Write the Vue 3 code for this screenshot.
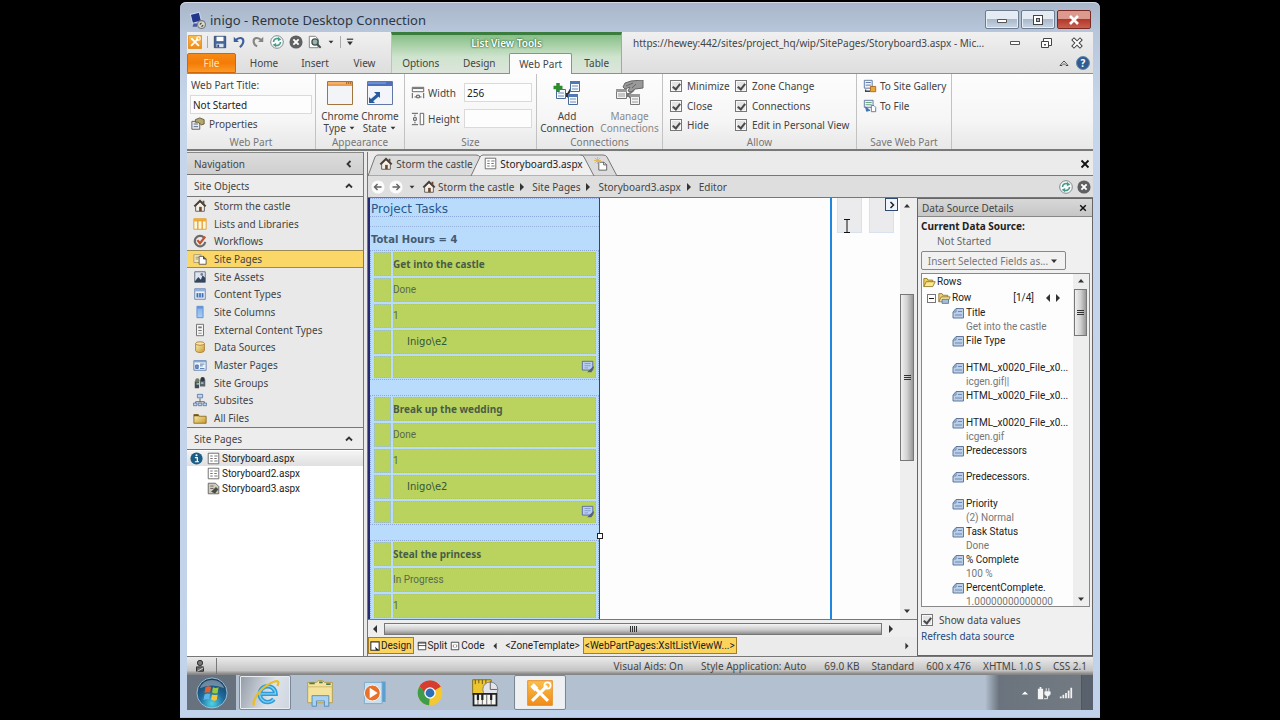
<script setup>
import { ref } from 'vue'

const title = ref('Not Started')
const partWidth = ref('256')
const partHeight = ref('')
const showValues = ref(true)

const allow = [
  ['Minimize', 'Close', 'Hide'],
  ['Zone Change', 'Connections', 'Edit in Personal View'],
]

const siteObjects = [
  { icon: 'home', label: 'Storm the castle' },
  { icon: 'lists', label: 'Lists and Libraries' },
  { icon: 'workflow', label: 'Workflows' },
  { icon: 'pages', label: 'Site Pages', active: true },
  { icon: 'assets', label: 'Site Assets' },
  { icon: 'ctype', label: 'Content Types' },
  { icon: 'column', label: 'Site Columns' },
  { icon: 'external', label: 'External Content Types' },
  { icon: 'data', label: 'Data Sources' },
  { icon: 'master', label: 'Master Pages' },
  { icon: 'groups', label: 'Site Groups' },
  { icon: 'subsites', label: 'Subsites' },
  { icon: 'folder', label: 'All Files' },
]

const pages = [
  { name: 'Storyboard.aspx', icon: 'page', info: true },
  { name: 'Storyboard2.aspx', icon: 'page' },
  { name: 'Storyboard3.aspx', icon: 'pageedit' },
]

const crumbs = ['Storm the castle', 'Site Pages', 'Storyboard3.aspx', 'Editor']

const tasks = [
  { title: 'Get into the castle', rows: 5, status: 'Done', hours: 1, owner: 'Inigo\\e2' },
  { title: 'Break up the wedding', rows: 5, status: 'Done', hours: 1, owner: 'Inigo\\e2' },
  { title: 'Steal the princess', rows: 3, status: 'In Progress', hours: 1, owner: 'Inigo\\e2' },
]

const fields = [
  { name: 'Title', value: 'Get into the castle' },
  { name: 'File Type', value: '' },
  { name: 'HTML_x0020_File_x0...', value: 'icgen.gif||' },
  { name: 'HTML_x0020_File_x0...', value: '' },
  { name: 'HTML_x0020_File_x0...', value: 'icgen.gif' },
  { name: 'Predecessors', value: '' },
  { name: 'Predecessors.', value: '' },
  { name: 'Priority', value: '(2) Normal' },
  { name: 'Task Status', value: 'Done' },
  { name: '% Complete', value: '100 %' },
  { name: 'PercentComplete.', value: '1.00000000000000' },
]

const status = ['Visual Aids: On', 'Style Application: Auto', '69.0 KB', 'Standard', '600 x 476', 'XHTML 1.0 S', 'CSS 2.1']
const taskbar = ['ie', 'explorer', 'media', 'chrome', 'movie', 'designer']
</script>

<template>
  <div class="screen">
    <svg class="defs" aria-hidden="true">
      <defs>
        <linearGradient id="gFolder" x1="0" y1="0" x2="1" y2="1"><stop offset="0" stop-color="#fff0b0" /><stop offset="1" stop-color="#c89a30" /></linearGradient>
        <linearGradient id="gOrange" x1="0" y1="0" x2="0" y2="1"><stop offset="0" stop-color="#fbc04a" /><stop offset="1" stop-color="#f08a18" /></linearGradient>
        <linearGradient id="gBlue" x1="0" y1="0" x2="0" y2="1"><stop offset="0" stop-color="#7fb0ea" /><stop offset="1" stop-color="#a9cdf6" /></linearGradient>
        <radialGradient id="gOrb" cx=".5" cy=".85" r=".9"><stop offset="0" stop-color="#4fd3e6" /><stop offset=".45" stop-color="#1f6a9c" /><stop offset="1" stop-color="#1b3350" /></radialGradient>
        <symbol id="home" viewBox="0 0 16 16"><path d="M3 8v6h10V8L8 3z" fill="#f4f0e8" stroke="#555" /><path d="M1.500 8.500 8 2l6.500 6.500" fill="none" stroke="#4a3d35" stroke-width="2.200" /><path d="M11 2h2v4h-2z" fill="#6a4a3a" /><path d="M7 9h3v5H7z" fill="#6b4a30" /></symbol>
        <symbol id="lists" viewBox="0 0 16 16"><path d="M1 2h14v12H1z" fill="#fff8dc" stroke="#d99a2b" /><path d="M1 2h14v3H1z" fill="#f2a930" /><path d="M5.500 4v10M10.500 4v10" stroke="#dca03a" stroke-width="1.500" /></symbol>
        <symbol id="workflow" viewBox="0 0 16 16"><path d="M12.500 4A6 6 0 1 0 14 9" fill="none" stroke="#6b6b6b" stroke-width="2.500" /><path d="m5 7 3 3.500L14 3" fill="none" stroke="#c0522f" stroke-width="2.500" /></symbol>
        <symbol id="pages" viewBox="0 0 16 16"><path d="M1 3h8v9H1z" fill="#f5e6b8" stroke="#a99a70" /><path d="M3 6h4M3 8h3" stroke="#9a8a60" /><path d="M7 5h5l3 3v6H7z" fill="#fff" stroke="#555" /><path d="M12 5v3h3" fill="#667" stroke="#444" /></symbol>
        <symbol id="assets" viewBox="0 0 16 16"><path d="M2 2h12v12H2z" fill="#dfe5ee" stroke="#5b6678" /><path d="m2 13 4-5 3 3 2-5 3 3v5H2z" fill="#33445e" /><circle cx="10" cy="5" r="1.500" fill="#6a7d9a" /></symbol>
        <symbol id="ctype" viewBox="0 0 16 16"><path d="M2 2h12v12H2z" fill="#eef3fa" stroke="#5b7aa8" /><path d="M2 2h12v3H2z" fill="#8fb0dc" /><path d="M4 7h8v5H4z" fill="#3f6fae" /><path d="M6.500 7v5M9.500 7v5" stroke="#d8e6f8" /></symbol>
        <symbol id="column" viewBox="0 0 16 16"><path d="M4.500 1.500h7v13h-7z" fill="url(#gBlue)" stroke="#5b8acb" /><path d="M5 2h6v2H5z" fill="#5f93d8" /></symbol>
        <symbol id="external" viewBox="0 0 16 16"><path d="M4 1.500h8v13H4z" fill="#f5f5f5" stroke="#666" /><path d="M6 4h4v2H6zM6 8h4v1H6zM6 11h4v1H6z" fill="#777" /></symbol>
        <symbol id="data" viewBox="0 0 16 16"><path d="M3 4v8c0 3 10 3 10 0V4" fill="url(#gFolder)" stroke="#a87d30" /><ellipse cx="8" cy="4" rx="5" ry="2" fill="#fbe7ad" stroke="#a87d30" /></symbol>
        <symbol id="master" viewBox="0 0 16 16"><path d="M1 3h14v11H1z" fill="#edf3fb" stroke="#5b7aa8" /><path d="M1 3h14v2H1z" fill="#87a8d2" /><path d="M3 8h3v4H3zM8 7h5M8 9h3M8 12h5" fill="#6d93c6" stroke="#4d74ac" /></symbol>
        <symbol id="groups" viewBox="0 0 16 16"><path d="M2 6h5v8H2z" fill="#444b50" /><path d="M8 4h6v8H8z" fill="#58646c" /><circle cx="5" cy="5" r="2.500" fill="#6e7c5e" /><circle cx="11" cy="3.500" r="2.500" fill="#30373c" /><path d="M4 8h3v2H4zM9 7h3v2H9z" fill="#9cb2c2" /></symbol>
        <symbol id="subsites" viewBox="0 0 16 16"><path d="M8 6v4M3 12v-2h10v2" fill="none" stroke="#555" /><path d="M5 1.500h6v4H5zM.500 11.500h4v3h-4zM6 11.500h4v3H6zM11.500 11.500h4v3h-4z" fill="#bcd2ee" stroke="#5d7ca8" /></symbol>
        <symbol id="folder" viewBox="0 0 16 16"><path d="M1 4h5l1 2h8v8H1z" fill="url(#gFolder)" stroke="#8a6a20" /><path d="M1 4h5l1 2H1z" fill="#6d5520" /></symbol>
        <symbol id="folderopen" viewBox="0 0 16 16"><path d="M1 13V3h4l1 2h6v3" fill="#f0cf60" stroke="#8a7020" /><path d="M1 13 4 7h11l-3 6z" fill="#fbe88a" stroke="#8a7020" /></symbol>
        <symbol id="rowfolder" viewBox="0 0 16 16"><path d="M1 12V2h4l1 2h6v3" fill="#f0cf80" stroke="#8a7020" /><path d="M1 12 4 6h11l-3 6z" fill="#fbe8a0" stroke="#8a7020" /><path d="M5 9h8v5H5z" fill="#a9bdd4" stroke="#56708c" /></symbol>
        <symbol id="page" viewBox="0 0 16 16"><path d="M1.500 1.500h13v13h-13z" fill="#fff" stroke="#555" /><path d="M4 5h3M4 8h3M4 11h3M9 5h4M9 8h3M9 11h4" stroke="#777" stroke-width="1.300" /></symbol>
        <symbol id="pageedit" viewBox="0 0 16 16"><path d="M1.500 1.500h9l4 4v9h-13z" fill="#cfcbbd" stroke="#555" /><path d="M4 5h4M4 8h4" stroke="#555" /><path d="m5 12 6-6 3 3-4 5z" fill="#4b4b45" /></symbol>
        <symbol id="info" viewBox="0 0 16 16"><circle cx="8" cy="8" r="7.500" fill="#1c5d85" /><circle cx="8" cy="4" r="1.300" fill="#fff" /><path d="M6 7h3v5M6 12h5" stroke="#fff" stroke-width="1.500" fill="none" /></symbol>
        <symbol id="newtab" viewBox="0 0 16 16"><path d="M5.500 6h6l3 3v6h-9z" fill="#fff" stroke="#555" /><path d="M11 6v3h3.500" fill="none" stroke="#555" /><path d="M4 0v8M0 4h8M1 1l6 6M7 1 1 7" stroke="#e2b545" stroke-width="1" /></symbol>
        <symbol id="field" viewBox="0 0 12 12"><path d="M1 5 4 1.500h7.500V11H1z" fill="#bccfe8" stroke="#5f789c" /><path d="M1 5h3V2M6 4.500h4M3 8h7" fill="none" stroke="#6e8ab2" /></symbol>
        <symbol id="sd" viewBox="0 0 16 16"><path d="M.500.500h15v15H.500z" fill="url(#gOrange)" stroke="#e58b20" /><path d="m3.500 12.500 8-8M4.500 4.500l8 8" stroke="#fff" stroke-width="2" /><circle cx="12" cy="4" r="2" fill="none" stroke="#fff" stroke-width="1.300" /><path d="m3 3 3 1-2 2z" fill="#fff" /></symbol>
        <symbol id="save" viewBox="0 0 16 16"><path d="M1.500 1.500h13v13h-13z" fill="#46669c" stroke="#2b4474" /><path d="M4 2h8v5H4z" fill="#fff" /><path d="M4 10h8v4H4z" fill="#dbe4f2" /><path d="M5 11h2v3H5z" fill="#2b4474" /></symbol>
        <symbol id="undo" viewBox="0 0 16 16"><path d="M2 2v6h6z" fill="#3f5f9e" /><path d="M4 6c4-4 9-3 9 1 0 3-2 5-4 7" fill="none" stroke="#3f5f9e" stroke-width="2.400" /></symbol>
        <symbol id="redo" viewBox="0 0 16 16"><path d="M14 2v6H8z" fill="#858585" /><path d="M12 6C8 2 3 3 3 7c0 3 2 5 4 6" fill="none" stroke="#858585" stroke-width="2.400" /></symbol>
        <symbol id="refresh" viewBox="0 0 16 16"><circle cx="8" cy="8" r="7.200" fill="#f8fbfa" stroke="#6d7d86" /><path d="M4 8a4 4 0 0 1 6-3.500M12 8a4 4 0 0 1-6 3.500" fill="none" stroke="#4a9a8a" stroke-width="1.800" /><path d="m9 2 4 3-4 2zM7 14l-4-3 4-2z" fill="#4a9a8a" /></symbol>
        <symbol id="stop" viewBox="0 0 16 16"><circle cx="8" cy="8" r="7.500" fill="#5f6062" /><path d="m5 5 6 6M11 5l-6 6" stroke="#fff" stroke-width="2.200" /></symbol>
        <symbol id="preview" viewBox="0 0 16 16"><path d="M1.500 1.500h7l3 3v10h-10z" fill="#fff" stroke="#777" /><circle cx="8" cy="8" r="3.500" fill="#9fb3ad" stroke="#3f5450" stroke-width="1.500" /><path d="m10.500 10.500 4 4" stroke="#3f5450" stroke-width="2.300" /></symbol>
        <symbol id="rdp" viewBox="0 0 16 16"><path d="m2 3 8-2 2 8-8 2z" fill="#24358c" stroke="#c9d3ee" /><path d="m5 11 3 0 0 3-4 0z" fill="#48589c" /><circle cx="12" cy="12" r="3.500" fill="#d8d8ca" stroke="#777" /><path d="m10.500 12 1.500-1.500M12 14l1.500-1.500" stroke="#444" /></symbol>
        <symbol id="props" viewBox="0 0 16 16"><path d="M1 5h9v9H1z" fill="#e9edf2" stroke="#555" /><path d="M3 8h5M3 11h5" stroke="#4a5b7a" /><path d="m5 3 5-2 5 2v5l-3 1-4-3H5z" fill="#b3a76c" stroke="#5d552e" /></symbol>
        <symbol id="ctypebig" viewBox="0 0 26 24"><path d="M.500.500h25v23H.500z" fill="#f3f4f7" stroke="#a27440" /><path d="M1 1h24v4H1z" fill="#eb9c4c" /><path d="M1 2h18" stroke="#f7c48c" /><path d="M19 2h5" stroke="#7a3d10" stroke-dasharray="1 1" /></symbol>
        <symbol id="cstatebig" viewBox="0 0 26 24"><path d="M.500.500h25v23H.500z" fill="#f3f5fa" stroke="#6278a4" /><path d="M1 1h24v4H1z" fill="#4c6fc0" /><path d="M1 2h18" stroke="#8fa9e0" /><path d="m4 20 7-6" stroke="#275d9e" stroke-width="3" /><path d="M7 11h6v6zM2 16v6h6z" fill="#275d9e" /></symbol>
        <symbol id="wicon" viewBox="0 0 16 16"><path d="M1.500 1.500h13v5h-13z" fill="#fff" stroke="#555" /><path d="M2 2h12v1.500H2z" fill="#777" /><path d="M1.500 8v6M14.500 8v6M4 12.500h2M10 12.500h2" stroke="#444" /><path d="M6.500 10.500h3v3h-3z" fill="none" stroke="#444" /></symbol>
        <symbol id="hicon" viewBox="0 0 16 16"><path d="M10.500 1.500h4v13h-4z" fill="#fff" stroke="#555" /><path d="M1 1.500h7M1 14.500h7M4.500 3v2M4.500 11v2" stroke="#444" /><path d="M3 6.500h3v3H3z" fill="none" stroke="#444" /></symbol>
        <symbol id="connect" viewBox="0 0 28 26"><path d="M12 14h3l4-7M12 16h3l2 5" fill="none" stroke="#333" stroke-width="2" /><path d="M17.500 1.500h9v10h-9zM3.500 9.500h9v9h-9zM15.500 14.500h9v10h-9z" fill="#f6f9fd" stroke="#4a6a98" /><path d="M17 1h10v3H17zM15 14h10v3H15z" fill="#4e78b4" /><path d="M19 6h6M19 9h6M5 13h6M5 16h6M17 19h6M17 22h6" stroke="#6d8cb8" /><path d="M5 3v9M.500 7.500h9" stroke="#2e8b2e" stroke-width="3.500" /></symbol>
        <symbol id="manage" viewBox="0 0 28 26"><path d="M10 14h3l5-4M10 16h3l3 4" fill="none" stroke="#777" stroke-width="2" /><path d="M.500 9.500h10v9H.500zM14.500 14.500h9v10h-9z" fill="#f3f3f3" stroke="#777" /><path d="M0 9h11v3H0zM14 14h10v3H14z" fill="#999" /><path d="M2 14h7M2 16h7M16 19h6M16 22h6" stroke="#999" /><path d="m9 3 6-2 12-1v8l-8 1-4 3-3-1 2-4-5 2-2-2z" fill="#999" stroke="#666" /><path d="m10 6 7-3M16 8l4-4" stroke="#666" /></symbol>
        <symbol id="gallery" viewBox="0 0 16 16"><path d="M1.500 1.500h9v9h-9z" fill="#eef3fb" stroke="#536f9c" /><path d="M3 4h6M3 7h6" stroke="#536f9c" /><path d="M3 12v2h5" fill="none" stroke="#444" stroke-width="1.500" /><path d="M8.500 8.500h6v6h-6z" fill="#eda63c" stroke="#a3661b" /></symbol>
        <symbol id="tofile" viewBox="0 0 16 16"><path d="M1.500 1.500h10v8h-10z" fill="#eef3fb" stroke="#536f9c" /><path d="M3 4h7M3 6.500h7" stroke="#5f9c70" /><path d="m3 9 5 4-4 1z" fill="#3f6fb4" stroke="#3f6fb4" /><path d="M9.500 7.500h3l2 2v5h-5z" fill="#fff" stroke="#536f9c" /></symbol>
        <symbol id="formedit" viewBox="0 0 16 16"><path d="M1.500 1.500h12v10h-12z" fill="#b9cef2" stroke="#50679c" /><path d="M4 4h7M4 6.500h7M4 9h4" stroke="#7e98cc" /><path d="M7 14h5l3-6-1-1-5 5z" fill="#56607a" /></symbol>
        <symbol id="design" viewBox="0 0 12 12"><path d="M1 1h10v10H1z" fill="#fff" stroke="#333" stroke-width="1.300" /><path d="m6 7 5 4H7z" fill="#222" /></symbol>
        <symbol id="split" viewBox="0 0 12 12"><path d="M1.500 1.500h9v9h-9z" fill="#fff" stroke="#333" /><path d="M1 5.500h10M1 2.500h10" stroke="#333" /></symbol>
        <symbol id="code" viewBox="0 0 12 12"><path d="M1.500 1.500h9v9h-9z" fill="#fff" stroke="#333" /><path d="M5 4 3.500 6 5 8M7 4l1.500 2L7 8" fill="none" stroke="#666" /></symbol>
        <symbol id="user" viewBox="0 0 16 16"><circle cx="8" cy="4.500" r="3" fill="#777" stroke="#222" /><path d="M4 9h8v5H4z" fill="#6c6c6c" stroke="#222" /><path d="m5 14 7-4" stroke="#ddd" /></symbol>
        <symbol id="start" viewBox="0 0 34 34"><circle cx="17" cy="17" r="16" fill="url(#gOrb)" stroke="#9cc3d8" /><path d="M10 11q3-2 6-.500l-1 6q-3-1-6 .500z" fill="#e3602c" /><path d="M18 11q3 1.500 6 0l-1 6q-3 1.500-6-.500z" fill="#97c93d" /><path d="M9 18.500q3-1.500 6-.500l-1 6q-3-1-6 .500z" fill="#5cb4e8" /><path d="M17 18.500q3 1.500 6 0l-1 6q-3 1.500-6-.500z" fill="#fbc431" /><path d="M4 12a14 14 0 0 1 26 0q-13-6-26 0z" fill="#fff" opacity=".35" /></symbol>
        <symbol id="ie" viewBox="0 0 34 34"><path d="M27 24a9 9 0 1 1 2-6H12" fill="none" stroke="#2f9bd8" stroke-width="5" /><path d="M27 24a9 9 0 1 1 2-6H12" fill="none" stroke="#7fd0f2" stroke-width="1.500" /><path d="M5 31C1 27 12 9 28 4c6-2 4 3 3 5" fill="none" stroke="#e9bd2b" stroke-width="2.600" /></symbol>
        <symbol id="explorer" viewBox="0 0 34 34"><path d="M3 5h10l2-2h5l2 2h9v23H3z" fill="#f3e39c" stroke="#b59a48" /><path d="M3 10h28" stroke="#cdb768" /><path d="M5 6h6M16 5h4M24 7h5" stroke="#4d7a50" stroke-width="2" /><path d="M8 32V20h19v12h-5v-6h-9v6z" fill="#a9d2f0" stroke="#5389b8" /></symbol>
        <symbol id="media" viewBox="0 0 34 34"><path d="M24 4h5v23h-5z" fill="#5aa0d0" /><path d="M5 5h20v24H5z" fill="#c9e0f0" stroke="#77a8cc" /><circle cx="14" cy="17" r="9" fill="#e8722a" stroke="#fff" /><path d="M11 11v12l9-6z" fill="#fff" /></symbol>
        <symbol id="chrome" viewBox="0 0 34 34"><circle cx="17" cy="17" r="14" fill="#f3c831" /><path d="M17 17 4.900 10a14 14 0 0 1 24.200 0z" fill="#d63c2f" /><path d="M17 17 4.900 10A14 14 0 0 0 16 31z" fill="#3f9c4b" /><path d="M17 10h12A14 14 0 0 0 6 8l5 9z" fill="#d63c2f" /><circle cx="17" cy="17" r="6.500" fill="#fff" /><circle cx="17" cy="17" r="5" fill="#2f6fb8" /></symbol>
        <symbol id="movie" viewBox="0 0 34 34"><path d="M3 2h21v17H3z" fill="#edc62e" stroke="#7b6513" /><path d="M6 2v5M10 2v4M14 2v5M18 2v4" stroke="#5e4d10" /><circle cx="23" cy="13" r="8.500" fill="#e3e3ea" stroke="#777" /><path d="M23 4v9h8" stroke="#555" fill="none" /><path d="M4 18h26v13H4z" fill="#f5f5f2" stroke="#222" stroke-width="2" /><path d="M9 18v13M14 18v13M19 18v13M24 18v13" stroke="#555" /><path d="M9 18v7M14 18v7M24 18v7" stroke="#222" stroke-width="2.500" /></symbol>
        <symbol id="designer" viewBox="0 0 34 34"><path d="M3 3h28v28H3z" fill="url(#gOrange)" stroke="#e58b20" /><path d="m8 26 17-17M11 11l15 15" stroke="#fff" stroke-width="3.500" /><circle cx="25.500" cy="8.500" r="3.500" fill="none" stroke="#fff" stroke-width="2" /><path d="m6 10 4-4 5 5-4 4z" fill="#fff" /></symbol>
        <symbol id="plug" viewBox="0 0 16 16"><path d="M1 3h6v12H1zM3 1h2v2H3z" fill="#f4f4f4" /><path d="M9 6.500h6v3l-2 2h-2l-2-2zM10.500 2.500V6M13.500 2.500V6" fill="#f4f4f4" stroke="#f4f4f4" /><path d="M12 11v3.500H8" fill="none" stroke="#f4f4f4" /></symbol>
        <symbol id="signal" viewBox="0 0 16 16"><path d="M2 12v2M5 10v4M8 8v6M11 5v9M14 2v12" stroke="#f2f2f2" stroke-width="2" /></symbol>
        <symbol id="chev" viewBox="0 0 10 10"><path d="m2 6.500 3-3 3 3" fill="none" stroke="#333" stroke-width="1.800" /></symbol>
        <symbol id="tri" viewBox="0 0 10 10"><path d="M2 3.500h6L5 7z" fill="#333" /></symbol>
        <symbol id="triright" viewBox="0 0 10 10"><path d="M3 1v8l4-4z" fill="#333" /></symbol>
        <symbol id="xmark" viewBox="0 0 10 10"><path d="m1.500 1.500 7 7M8.500 1.500l-7 7" stroke="#111" stroke-width="1.800" /></symbol>
        <symbol id="arrow" viewBox="0 0 16 16"><circle cx="8" cy="8" r="7.500" fill="#fbfbfb" /><path d="M4 8h8M7.500 4.500 4 8l3.500 3.500" fill="none" stroke="#666" stroke-width="1.700" /></symbol>
      </defs>
    </svg>

    <div class="window">
      <header class="titlebar">
        <svg class="i18"><use href="#rdp" /></svg>
        <h1>inigo - Remote Desktop Connection</h1>
        <div class="wincontrols">
          <button aria-label="Minimize window"><svg class="i14" viewBox="0 0 14 14"><path d="M2.500 6.500h9v3h-9z" fill="#fff" stroke="#555" /></svg></button>
          <button aria-label="Maximize window"><svg class="i14" viewBox="0 0 14 14"><path d="M4 4h6v6H4z" fill="none" stroke="#444" stroke-width="4" /><path d="M4 4h6v6H4z" fill="none" stroke="#fff" stroke-width="2" /></svg></button>
          <button class="close" aria-label="Close window"><svg class="i14" viewBox="0 0 14 14"><path d="m3 3 8 8M11 3l-8 8" stroke="#fff" stroke-width="2.600" /></svg></button>
        </div>
      </header>

      <div class="app">
        <div class="apphead">
          <div class="headleft">
            <div class="quick">
              <svg class="i14"><use href="#sd" /></svg><i class="sep"></i>
              <button aria-label="Save"><svg class="i14"><use href="#save" /></svg></button>
              <button aria-label="Undo"><svg class="i14"><use href="#undo" /></svg></button>
              <button aria-label="Redo"><svg class="i14"><use href="#redo" /></svg></button>
              <button aria-label="Refresh"><svg class="i14"><use href="#refresh" /></svg></button>
              <button aria-label="Stop"><svg class="i14"><use href="#stop" /></svg></button>
              <button aria-label="Preview"><svg class="i14"><use href="#preview" /></svg></button>
              <svg class="i8"><use href="#tri" /></svg><i class="sep"></i>
              <button aria-label="Customize"><svg class="i8" viewBox="0 0 10 10"><path d="M1 1.500h8" stroke="#333" stroke-width="1.500" /><path d="M1.500 4.500h7L5 9z" fill="#333" /></svg></button>
            </div>
            <nav class="tabs">
              <button class="file">File</button><button class="t56">Home</button><button class="t46">Insert</button><button class="t52">View</button>
            </nav>
          </div>
          <div class="context">
            <div class="contexttitle">List View Tools</div>
            <nav class="tabs">
              <button class="t60">Options</button><button class="t58">Design</button><button class="t64 on">Web Part</button><button class="t50">Table</button>
            </nav>
          </div>
          <div class="headright">
            <div class="doctitle">
              <span>https://hewey:442/sites/project_hq/wip/SitePages/Storyboard3.aspx - Mic...</span>
              <button aria-label="Minimize"><svg class="i12" viewBox="0 0 12 12"><path d="M1.500 4.500h9v3h-9z" fill="#fff" stroke="#555" /></svg></button>
              <button aria-label="Restore"><svg class="i12" viewBox="0 0 12 12"><path d="M3.500 1.500h8v7h-8z" fill="#fff" stroke="#444" /><path d="M1.500 4.500h7v6h-7z" fill="#fff" stroke="#444" /><path d="M4 7h2v1.500H4z" fill="#555" /></svg></button>
              <button aria-label="Close"><svg class="i12" viewBox="0 0 12 12"><path d="m3 3 6 6M9 3 3 9" stroke="#444" stroke-width="4" stroke-linecap="square" /><path d="m3 3 6 6M9 3 3 9" stroke="#fff" stroke-width="2" stroke-linecap="square" /></svg></button>
            </div>
            <div class="helprow">
              <button aria-label="Collapse ribbon"><svg class="i12" viewBox="0 0 12 12"><path d="M2 8.500 6 4l4 4.500H8L6 6.500 4 8.500z" fill="#fff" stroke="#444" /></svg></button>
              <button class="help" aria-label="Help">?</button>
            </div>
          </div>
        </div>

        <section class="ribbon">
          <div class="group g-part">
            <div class="gbody partbody">
              <label for="wp-title">Web Part Title:</label>
              <input id="wp-title" v-model="title" type="text" />
              <button class="row4"><svg class="i14"><use href="#props" /></svg>Properties</button>
            </div>
            <div class="glabel">Web Part</div>
          </div>
          <div class="group g-look">
            <div class="gbody bigs">
              <button><svg class="w26"><use href="#ctypebig" /></svg><span>Chrome</span><span>Type <svg class="i8"><use href="#tri" /></svg></span></button>
              <button><svg class="w26"><use href="#cstatebig" /></svg><span>Chrome</span><span>State <svg class="i8"><use href="#tri" /></svg></span></button>
            </div>
            <div class="glabel">Appearance</div>
          </div>
          <div class="group g-size">
            <div class="gbody sizes">
              <div><svg class="i14"><use href="#wicon" /></svg><label for="wp-w">Width</label><input id="wp-w" v-model="partWidth" type="text" /></div>
              <div><svg class="i14"><use href="#hicon" /></svg><label for="wp-h">Height</label><input id="wp-h" v-model="partHeight" type="text" /></div>
            </div>
            <div class="glabel">Size</div>
          </div>
          <div class="group g-conn">
            <div class="gbody bigs">
              <button><svg class="w28"><use href="#connect" /></svg><span>Add</span><span>Connection</span></button>
              <button class="dim" disabled><svg class="w28"><use href="#manage" /></svg><span>Manage</span><span>Connections</span></button>
            </div>
            <div class="glabel">Connections</div>
          </div>
          <div class="group g-allow">
            <div class="gbody checks">
              <div v-for="(col, c) in allow" :key="c">
                <label v-for="a in col" :key="a"><input type="checkbox" checked />{{ a }}</label>
              </div>
            </div>
            <div class="glabel">Allow</div>
          </div>
          <div class="group g-save">
            <div class="gbody saves">
              <button class="row4"><svg class="i14"><use href="#gallery" /></svg>To Site Gallery</button>
              <button class="row4"><svg class="i14"><use href="#tofile" /></svg>To File</button>
            </div>
            <div class="glabel">Save Web Part</div>
          </div>
        </section>

        <main class="work">
          <aside class="navpane">
            <div class="navhead">Navigation<button aria-label="Collapse navigation"><svg class="i10" viewBox="0 0 10 10"><path d="M6.500 2 3.500 5l3 3" fill="none" stroke="#333" stroke-width="1.800" /></svg></button></div>
            <div class="navsub">Site Objects<svg class="i10"><use href="#chev" /></svg></div>
            <ul class="objects">
              <li v-for="o in siteObjects" :key="o.label" :class="{ active: o.active }">
                <a href="#"><svg class="i14"><use :href="'#' + o.icon" /></svg>{{ o.label }}</a>
              </li>
            </ul>
            <div class="navsub">Site Pages<svg class="i10"><use href="#chev" /></svg></div>
            <ul class="files">
              <li v-for="p in pages" :key="p.name" :class="{ sel: p.info }">
                <span class="mark"><svg v-if="p.info" class="i13"><use href="#info" /></svg></span>
                <a href="#"><svg class="i13"><use :href="'#' + p.icon" /></svg>{{ p.name }}</a>
              </li>
            </ul>
          </aside>

          <section class="editor">
            <div class="doctabs">
              <svg class="tabshape" viewBox="0 0 256 24">
                <path d="M0 24 7 5q1-2 3-2h98q3 0 4 2l8 16v3z" fill="#dcdcdc" stroke="#777" />
                <path d="M210 5q1-2 3-2h22q3 0 4 2l10 19h-30z" fill="#dcdcdc" stroke="#777" />
                <path d="M103 24 112 5q1-2 3-2h97q3 0 4 2l10 19z" fill="#f0f0f0" stroke="#777" />
              </svg>
              <button class="d1"><svg class="i14"><use href="#home" /></svg>Storm the castle</button>
              <button class="d2"><svg class="i13"><use href="#page" /></svg>Storyboard3.aspx</button>
              <button class="d3" aria-label="New tab"><svg class="i14"><use href="#newtab" /></svg></button>
              <button class="dclose" aria-label="Close tab"><svg class="i10"><use href="#xmark" /></svg></button>
            </div>
            <div class="crumbs">
              <button aria-label="Back"><svg class="i14"><use href="#arrow" /></svg></button>
              <button class="flip" aria-label="Forward"><svg class="i14"><use href="#arrow" /></svg></button>
              <svg class="i8 drop"><use href="#tri" /></svg>
              <svg class="i14"><use href="#home" /></svg>
              <template v-for="(c, i) in crumbs" :key="c">
                <svg v-if="i" class="i10"><use href="#triright" /></svg><a href="#">{{ c }}</a>
              </template>
              <div class="crumbend">
                <button aria-label="Reload"><svg class="i14"><use href="#refresh" /></svg></button>
                <button aria-label="Stop loading"><svg class="i14"><use href="#stop" /></svg></button>
              </div>
            </div>

            <div class="panes">
              <div class="canvaswrap">
                <div class="canvasrow">
                  <div class="canvas">
                    <div class="webpart">
                      <div class="wphead">Project Tasks</div>
                      <div class="total">Total Hours = 4</div>
                      <table v-for="t in tasks" :key="t.title">
                        <tbody>
                          <tr><td></td><td><strong>{{ t.title }}</strong></td></tr>
                          <tr><td></td><td>{{ t.status }}</td></tr>
                          <tr><td></td><td>{{ t.hours }}</td></tr>
                          <template v-if="t.rows > 3">
                            <tr><td></td><td class="owner">{{ t.owner }}</td></tr>
                            <tr class="last"><td></td><td class="edit"><svg class="i14"><use href="#formedit" /></svg></td></tr>
                          </template>
                        </tbody>
                      </table>
                    </div>
                    <div class="zone">
                      <span></span><span></span>
                      <button aria-label="Web part menu"><svg class="i10" viewBox="0 0 10 10"><path d="m3.500 2 3 3-3 3" fill="none" stroke="#222" stroke-width="1.500" /></svg></button>
                      <svg class="ibeam" viewBox="0 0 8 16"><path d="M1 1.500h6M1 14.500h6M4 1v14" stroke="#111" /></svg>
                    </div>
                    <i class="handle"></i>
                  </div>
                  <div class="vscroll"><svg class="i10 flip"><use href="#tri" /></svg><div class="track"><i class="thumb"></i></div><svg class="i10"><use href="#tri" /></svg></div>
                </div>
                <div class="hscroll"><svg class="i10 flip"><use href="#triright" /></svg><i class="thumb"></i><svg class="i10"><use href="#triright" /></svg></div>
                <div class="viewbar">
                  <button class="gold"><svg class="i10"><use href="#design" /></svg>Design</button>
                  <button><svg class="i10"><use href="#split" /></svg>Split</button>
                  <button><svg class="i10"><use href="#code" /></svg>Code</button>
                  <svg class="i8 flip"><use href="#triright" /></svg>
                  <button class="tag">&lt;ZoneTemplate&gt;</button>
                  <button class="gold">&lt;WebPartPages:XsltListViewW...&gt;</button>
                  <svg class="i8 push"><use href="#triright" /></svg>
                </div>
              </div>

              <aside class="details">
                <div class="dhead">Data Source Details<button aria-label="Close panel"><svg class="i8"><use href="#xmark" /></svg></button></div>
                <div class="dbody">
                  <h2>Current Data Source:</h2>
                  <p>Not Started</p>
                  <button class="insert">Insert Selected Fields as... <svg class="i10"><use href="#tri" /></svg></button>
                  <div class="tree">
                    <div class="treelist">
                      <div class="r0"><svg class="i13"><use href="#folderopen" /></svg>Rows</div>
                      <div class="r1"><i class="minus"></i><svg class="i13"><use href="#rowfolder" /></svg>Row<span>[1/4]</span><svg class="i10 flip"><use href="#triright" /></svg><svg class="i10"><use href="#triright" /></svg></div>
                      <dl>
                        <template v-for="(f, i) in fields" :key="i">
                          <dt><svg class="i12"><use href="#field" /></svg>{{ f.name }}</dt>
                          <dd>{{ f.value }}</dd>
                        </template>
                      </dl>
                    </div>
                    <div class="vscroll small"><svg class="i10 flip"><use href="#tri" /></svg><div class="track"><i class="thumb"></i></div><svg class="i10"><use href="#tri" /></svg></div>
                  </div>
                  <label class="show"><input v-model="showValues" type="checkbox" />Show data values</label>
                  <a href="#" class="refreshlink">Refresh data source</a>
                </div>
              </aside>
            </div>
          </section>
        </main>

        <footer class="statusbar">
          <svg class="i14"><use href="#user" /></svg><i></i>
          <div><span v-for="s in status" :key="s">{{ s }}</span></div>
        </footer>
        <div class="taskbar">
          <button class="startbtn" aria-label="Start"><svg class="i32"><use href="#start" /></svg></button>
          <button v-for="t in taskbar" :key="t" :class="{ open: t === 'ie' || t === 'designer', warm: t === 'designer' }" :aria-label="t"><svg class="i30"><use :href="'#' + t" /></svg></button>
          <div class="tray">
            <svg class="i8" viewBox="0 0 10 10"><path d="M1 7h8L5 3z" fill="#fff" /></svg>
            <svg class="i14"><use href="#plug" /></svg><svg class="i14"><use href="#signal" /></svg><i></i>
          </div>
        </div>
      </div>
    </div>
  </div>
</template>

<style>
html, body { margin: 0; background: #000; }
</style>

<style scoped>
* { box-sizing: border-box; }
.screen { min-height: 100vh; display: flex; padding: 2px 180px; background: #000; font: 10px/14px "Noto Sans", "Open Sans", sans-serif; color: #444; }
.defs { position: absolute; width: 0; height: 0; }
button { font: inherit; color: inherit; background: none; border: 0; padding: 0; margin: 0; display: flex; align-items: center; justify-content: center; white-space: nowrap; }
a { color: inherit; text-decoration: none; }
ul, dl, dd, h1, h2, p { margin: 0; padding: 0; list-style: none; }
svg { flex: none; display: block; }
.i8 { width: 8px; height: 8px; } .i10 { width: 10px; height: 10px; } .i12 { width: 12px; height: 12px; }
.i13 { width: 13px; height: 13px; } .i14 { width: 14px; height: 14px; } .i18 { width: 18px; height: 20px; } .i30 { width: 30px; height: 30px; } .i32 { width: 32px; height: 32px; }
.w26 { width: 26px; height: 24px; } .w28 { width: 28px; height: 26px; }
.flip { transform: rotate(180deg); }

.window { flex: 1; min-width: 0; display: flex; flex-direction: column; padding: 0 7px 7px; background: linear-gradient(#a9b6c9, #b7c6da 30px, #c6d5ea 100px, #c1d3ea); border: 0 solid #8fd0da; border-bottom-width: 1px; border-radius: 6px 6px 0 0; box-shadow: inset 0 1px #d4dbe5; }
.titlebar { height: 30px; display: flex; align-items: center; gap: 4px; padding: 5px 2px 0 1px; }
.titlebar h1 { font: 13px/16px "Noto Sans", sans-serif; color: #2c3645; }
.wincontrols { margin-left: auto; display: flex; gap: 2px; }
.wincontrols button { width: 34px; height: 19px; border: 1px solid #6c7b90; border-radius: 2px; background: linear-gradient(#e4ebf3 45%, #a9b8ca 50%, #c8d5e4); box-shadow: inset 0 0 0 1px #e5edf5; }
.wincontrols .close { border-color: #7a2a25; background: linear-gradient(#dc9a8e 45%, #b3382b 50%, #c9604e); box-shadow: none; }

.app { flex: 1; display: flex; flex-direction: column; background: #e9e9e9; }
.apphead { height: 42px; display: flex; background: linear-gradient(#f0f0f0, #dedede); border-bottom: 1px solid #7d9a85; }
.headleft { width: 204px; }
.quick { height: 20px; display: flex; align-items: center; gap: 5px; padding: 0 1px; }
.quick .sep { width: 1px; height: 12px; background: #aaa; }
.tabs { display: flex; height: 21px; }
.headleft .tabs { padding-top: 1px; height: 22px; }
.tabs button { height: 20px; }
.file { width: 49px; color: #ffe5bd; background: linear-gradient(#f58a16, #f47b06 50%, #fb9a28); border: 1px solid #d1660a; border-radius: 2px 2px 0 0; }
.t56 { width: 56px; } .t46 { width: 46px; } .t52 { width: 53px; } .t60 { width: 58px; } .t58 { width: 60px; } .t64 { width: 64px; } .t50 { width: 49px; }
.context { width: 231px; border-top: 3px solid #3a7d3c; border-left: 1px solid #b5c9b5; border-right: 1px solid #9dad9d; background: linear-gradient(#87bf87, #cfe4ce 22px, #dde4dc); }
.contexttitle { height: 18px; line-height: 17px; text-align: center; color: #fff; text-shadow: 0 0 2px #2f6a33, 0 0 2px #2f6a33; font-weight: 600; }
.tabs .on { height: 21px; background: #fcfcfc; border: 1px solid #7d9a85; border-bottom: 0; border-radius: 2px 2px 0 0; }
.headright { flex: 1; min-width: 0; }
.doctitle { height: 21px; display: flex; align-items: center; padding: 0 10px 0 11px; }
.doctitle span { flex: 1; min-width: 0; white-space: nowrap; }
.doctitle button { margin-left: 19px; }
.helprow { display: flex; justify-content: flex-end; align-items: center; height: 20px; gap: 6px; padding-right: 3px; }
.help { width: 14px; height: 14px; border-radius: 50%; background: #2f5d92; color: #fff; font-weight: 700; border: 1px solid #6d87a8; }

.ribbon { height: 77px; display: flex; background: linear-gradient(#fdfdfd, #f6f6f6 60%, #e8e8e8); border-bottom: 2px solid #777a77; }
.group { display: flex; flex-direction: column; border-right: 1px solid #c2c2c2; }
.gbody { height: 61px; }
.glabel { height: 14px; line-height: 14px; text-align: center; color: #777; }
.g-part { width: 129px; } .g-look { width: 89px; } .g-size { width: 132px; } .g-conn { width: 126px; } .g-allow { width: 194px; } .g-save { width: 95px; }
input[type="text"] { font: inherit; color: #222; border: 1px solid #dadada; background: #fdfdfd; padding: 0 2px; min-width: 0; height: 19px; outline: 0; }
.partbody { display: grid; grid-template-rows: 21px 19px 20px; padding: 0 3px 0 4px; align-items: center; }
.partbody input { margin-left: -1px; }
.row4 { gap: 4px; justify-content: flex-start; }
.bigs { display: flex; justify-content: center; padding: 7px 4px 0; }
.bigs button { flex: 1 1 0; flex-direction: column; justify-content: flex-start; text-align: center; line-height: 12px; }
.bigs button > svg { margin-bottom: 5px; }
.g-conn .bigs { padding: 6px 0 0; }
.g-conn .bigs button { flex: 1 1 auto; }
.bigs button > .w28 { margin-bottom: 4px; }
.bigs span svg { display: inline-block; }
.dim { color: #888; }
.sizes { padding: 9px 4px 0 6px; display: flex; flex-direction: column; gap: 7px; }
.sizes div { display: grid; grid-template-columns: 14px 33px 1fr; gap: 3px; align-items: center; }
.checks { display: flex; padding: 2px 0 0 7px; }
.checks > div { width: 65px; display: grid; grid-template-rows: 20px 19px 20px; }
.checks > div + div { width: 120px; }
.checks label, .show { display: flex; align-items: center; gap: 5px; white-space: nowrap; }
input[type="checkbox"] { appearance: none; width: 12px; height: 12px; margin: 0; border: 1px solid #777; background: #e4e4e4; box-shadow: inset 0 0 0 1px #f8f8f8; display: grid; place-items: center; }
input[type="checkbox"]:checked::after { content: ""; width: 3px; height: 6px; border: solid #4a4a4a; border-width: 0 2px 2px 0; transform: rotate(38deg); }
.saves { padding: 2px 0 0 6px; display: grid; grid-template-rows: 20px 19px; align-content: start; }
.saves .row4 { gap: 3px; }

.work { flex: 1; min-height: 0; display: flex; gap: 3px; padding-top: 1px; }
.navpane { width: 177px; border-right: 1px solid #777; display: flex; flex-direction: column; background: #e9e9e9; }
.navhead, .navsub { display: flex; align-items: center; justify-content: space-between; height: 22px; padding: 0 9px 0 7px; border-bottom: 1px solid #777; }
.navhead { background: linear-gradient(#dcdcdc, #cfcfcf); height: 23px; border-top: 1px solid #888; }
.navsub { background: #ededed; }
.objects { height: 231px; display: grid; grid-auto-rows: 1fr; border-bottom: 1px solid #777; }
.objects li { display: flex; border: solid transparent; border-width: 1px 0; padding-left: 6px; }
.objects a, .files a { display: flex; align-items: center; white-space: nowrap; }
.objects a { gap: 7px; }
.objects .active { background: #fbd768; border-color: #9a8a55; }
.files { flex: 1; background: #fff; padding-top: 1px; font-family: Roboto, "Noto Sans", sans-serif; }
.files li { display: flex; align-items: center; height: 15px; padding-left: 3px; }
.files .sel { background: linear-gradient(#f4f4f4, #e0e0e0); }
.files .mark { width: 17px; display: flex; }
.files a { gap: 2px; color: #222; }

.editor { flex: 1; min-width: 0; display: flex; flex-direction: column; border-left: 1px solid #777; }
.doctabs { position: relative; height: 24px; display: flex; align-items: center; border-bottom: 1px solid #777; background: #ebebeb; }
.tabshape { position: absolute; left: 0; top: 0; width: 256px; height: 24px; }
.doctabs button { position: relative; gap: 3px; }
.d1 { width: 111px; padding-left: 5px; } .d2 { width: 111px; margin-left: -2px; padding-left: 2px; color: #222; } .d3 { width: 25px; }
.doctabs .dclose { margin-left: auto; padding-right: 3px; }
.crumbs { height: 22px; display: flex; align-items: center; background: #dedede; border-bottom: 1px solid #777; padding: 0 2px 0 3px; gap: 4px; }
.crumbs > .i10 { margin: 0 1px 0 -1px; }
.crumbs .i14 + a { margin-left: -2px; }
.crumbs .drop { margin: 0 2px 0 1px; }
.crumbend { margin-left: auto; display: flex; gap: 4px; }

.panes { flex: 1; min-height: 0; display: flex; }
.canvaswrap { flex: 1; min-width: 0; display: flex; flex-direction: column; }
.canvasrow { height: 421px; display: flex; }
.canvas { position: relative; flex: 1; display: flex; justify-content: space-between; overflow: hidden; background: #fdfdfd; }
.webpart { width: 232px; border-left: 2px solid #2b2a6e; border-right: 1px solid #444; background: #b9dcfd; }
.wphead { height: 19px; padding-left: 1px; line-height: 20px; color: #28588c; border: 1px dotted #8fa9dc; border-width: 1px 0; font-size: 12px; font-family: "DejaVu Sans", sans-serif; }
.total { margin-top: 9px; height: 24px; padding: 2px 0 0 1px; border-top: 1px dotted #9ab3dd; font: 700 10px/22px "DejaVu Sans", sans-serif; color: #445a70; }
table { width: 100%; border: 1px dotted #8fa9dc; border-spacing: 0; border-collapse: separate; margin-bottom: 15px; padding: 0 1px 0 2px; }
tr, td { height: 26px; }
.last, .last td { height: 24px; }
td { padding: 0; border: 1px solid #b9dcfd; background: #bad35f; color: #566a4c; vertical-align: middle; outline: 1px dotted #9dc0b8; outline-offset: -2px; font: 10px/14px Roboto, "Noto Sans", sans-serif; }
td:first-child { width: 19px; }
strong { color: #4a5c46; font-family: "Noto Sans", sans-serif; }
.owner { padding-left: 14px; color: #34563c; font-family: "DejaVu Sans", sans-serif; }
.edit { padding-right: 1px; }
.edit svg { margin-left: auto; }
.zone { position: relative; width: 70px; border-left: 2px solid #2086dc; display: flex; gap: 7px; padding-left: 5px; }
.zone span { width: 25px; height: 35px; background: #ebebed; border: 1px solid #d7e2ee; border-top: 0; }
.zone button { position: absolute; right: 2px; top: 0; width: 13px; height: 13px; border: 1px solid #2f4a70; background: #eef5fc; }
.ibeam { position: absolute; left: 11px; top: 20px; width: 8px; height: 16px; }
.handle { position: absolute; left: 229px; top: 335px; width: 6px; height: 6px; border: 1px solid #222; background: #fff; }
.vscroll { width: 17px; display: flex; flex-direction: column; align-items: center; background: #eee; padding: 3px 3px 3px 0; }
.vscroll .track { flex: 1; width: 100%; display: flex; padding-top: 83px; }
.thumb { border: 1px solid #777; background: linear-gradient(90deg, #f0f0f0, #d2d2d2 50%, #979797); display: flex; align-items: center; justify-content: center; }
.thumb::after { content: ""; width: 7px; height: 6px; background: repeating-linear-gradient(#333 0 1px, transparent 1px 2px); }
.vscroll .thumb { width: 14px; height: 167px; }
.vscroll.small { width: 16px; padding: 2px 1px; }
.small .track { padding-top: 3px; }
.small .thumb { width: 13px; height: 47px; }
.hscroll { height: 18px; display: flex; align-items: center; border-top: 1px solid #777; background: #eee; padding: 0 21px 0 2px; gap: 4px; }
.hscroll .thumb { flex: 1; height: 12px; background: linear-gradient(#f4f4f4, #c9c9c9 60%, #8e8e8e); }
.hscroll .thumb::after { background: repeating-linear-gradient(90deg, #333 0 1px, transparent 1px 2px); }
.viewbar { flex: 1; display: flex; align-items: center; gap: 3px; padding: 0 6px 2px 0; background: #ebebeb; font-family: Roboto, "Noto Sans", sans-serif; }
.viewbar button { height: 17px; gap: 1px; color: #222; }
.viewbar .gold { border: 1px solid #a67c1e; background: #fbd45e; padding: 0 1px; }
.viewbar > .i8 { margin: 0 3px 0 4px; } .viewbar > .push { margin: 0 0 0 auto; }

.details { width: 176px; border: 1px solid #666; display: flex; flex-direction: column; background: #f0f0f0; }
.dhead { height: 18px; display: flex; align-items: center; justify-content: space-between; padding: 0 5px 0 4px; background: linear-gradient(#d8d8d8, #c6c6c6); border-bottom: 1px solid #888; }
.dbody { flex: 1; display: flex; flex-direction: column; align-items: flex-start; padding: 2px 2px 0 3px; }
h2 { font: 700 10px/14px "Noto Sans", sans-serif; color: #222; }
.dbody p { padding-left: 16px; line-height: 16px; color: #666; }
.insert { margin-top: 2px; width: 145px; height: 19px; border: 1px solid #888; border-radius: 2px; gap: 1px; color: #777; background: #f1f1f1; }
.tree { margin-top: 3px; width: 100%; height: 334px; border: 1px solid #888; display: flex; background: #fdfdfd; overflow: hidden; font-family: Roboto, "Noto Sans", sans-serif; }
.treelist { flex: 1; min-width: 0; color: #222; padding-left: 1px; }
.r0, .r1 { display: flex; align-items: center; height: 16px; gap: 1px; }
.r1 { padding-left: 4px; }
.r1 span { margin: 0 8px 0 auto; }
.r1 .i10 { margin-right: -1px; }
.r1 .i10:last-child { margin-right: 10px; }
.minus { width: 9px; height: 9px; border: 1px solid #777; margin-right: 1px; display: grid; place-items: center; }
.minus::after { content: ""; width: 5px; height: 1px; background: #222; }
dl { height: 303px; display: grid; grid-auto-rows: 1fr; padding-left: 29px; line-height: 14px; }
dt { display: flex; align-items: center; gap: 2px; white-space: nowrap; }
dd { padding-left: 14px; color: #777; }
.show { margin-top: 5px; height: 16px; gap: 6px; }
.refreshlink { color: #1f4a82; line-height: 16px; }

.statusbar { height: 19px; display: flex; align-items: center; padding-left: 6px; border-top: 1px solid #777; background: linear-gradient(#ebebeb, #c4c4c4 75%, #858585 95%); color: #444; }
.statusbar > i { width: 1px; height: 16px; background: #777; margin-left: 9px; }
.statusbar div { margin-left: auto; display: flex; gap: 12px; padding-right: 6px; white-space: nowrap; }
.statusbar span:nth-child(-n + 2) { margin-right: 6px; }
.taskbar { height: 35px; display: flex; align-items: stretch; background: #b3c0d0; gap: 3px; }
.taskbar button { width: 52px; }
.taskbar .startbtn { width: 49px; background: #68727f; }
.taskbar .open { border: 1px solid #7b8795; border-radius: 2px; background: linear-gradient(110deg, #929aa5, #dde3ea 60%, #cdd5df); box-shadow: inset 0 0 0 1px #e8edf2; }
.taskbar .warm { background: #eef0f2; }
.tray { margin-left: auto; width: 108px; display: flex; align-items: center; justify-content: flex-end; gap: 8px; background: linear-gradient(90deg, #b3c0d0, #6b747e 14px, #737a82); }
.tray i { width: 12px; height: 100%; border-left: 1px solid #4e565f; background: #59626c; }
</style>
